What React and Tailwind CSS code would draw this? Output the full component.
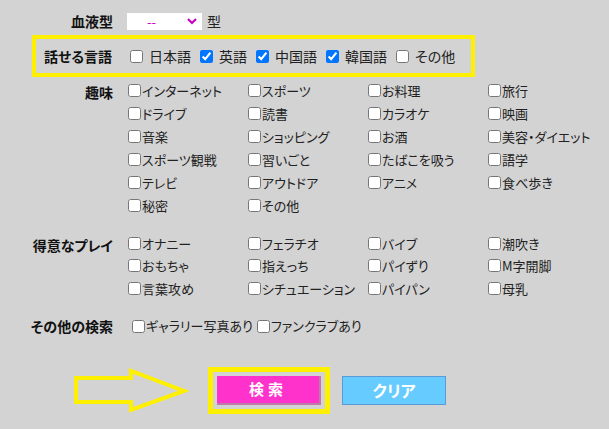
const hobbies = [
    "インターネット", "スポーツ", "お料理", "旅行",
    "ドライブ", "読書", "カラオケ", "映画",
    "音楽", "ショッピング", "お酒", "美容・ダイエット",
    "スポーツ観戦", "習いごと", "たばこを吸う", "語学",
    "テレビ", "アウトドア", "アニメ", "食べ歩き",
    "秘密", "その他",
];

const plays = [
    "オナニー", "フェラチオ", "バイブ", "潮吹き",
    "おもちゃ", "指えっち", "パイずり", "M字開脚",
    "言葉攻め", "シチュエーション", "パイパン", "母乳",
];

const languages = [
    { name: "日本語", checked: false },
    { name: "英語", checked: true },
    { name: "中国語", checked: true },
    { name: "韓国語", checked: true },
    { name: "その他", checked: false },
];

const Check = ({ checked = false }) => (
    <input type="checkbox" defaultChecked={checked} className="m-0 w-[13px] h-[13px] shrink-0 accent-[#0075ff]" />
);

const Label = ({ children, className = "" }) => (
    <div className={`w-[113px] shrink-0 text-right font-bold text-[14px] text-[#111] ${className}`}>{children}</div>
);

const CheckGrid = ({ items }) => (
    <div className="grid grid-cols-[120px_120px_120px_120px] ml-[15px]">
        {items.map((item) => (
            <label key={item} className="flex items-center h-[23px] text-[13px] text-[#222] whitespace-nowrap">
                <Check />
                <span className="ml-px">{item}</span>
            </label>
        ))}
    </div>
);

const Arrow = () => (
    <svg width="116" height="45" viewBox="0 0 116 45">
        <path d="M3 10 H58 V3 L111 23 L58 42 V34 H3 Z" fill="none" stroke="#fff000" strokeWidth="4" />
    </svg>
);

export default function App() {
    return (
        <div className="w-[609px] h-[429px] bg-[#d3d3d3] overflow-hidden [font-feature-settings:'palt']" style={{ fontFamily: '"Noto Sans CJK JP", "Noto Sans", sans-serif' }}>
            {/* 血液型 */}
            <div className="flex items-center pt-[13px] h-[30px]">
                <Label>血液型</Label>
                <div className="ml-[14px] w-[75px] h-[17px] bg-white flex items-center justify-between pl-[20px] pr-[5px] text-[#cc00cc] text-[13px] leading-none">
                    <span>--</span>
                    <svg width="10" height="7" viewBox="0 0 10 7"><path d="M1 1 L5 5 L9 1" fill="none" stroke="#cc00cc" strokeWidth="2.2" /></svg>
                </div>
                <span className="ml-[5px] text-[14px] text-[#222]">型</span>
            </div>

            {/* 話せる言語 */}
            <div className="ml-[32px] mt-[5px] w-[443px] h-[42px] border-4 border-[#fff000] flex items-center">
                <div className="w-[76px] shrink-0 text-right font-bold text-[14px] text-[#111]">話せる言語</div>
                <div className="flex items-center ml-[18px] text-[14px] text-[#222]">
                    {languages.map((lang, i) => (
                        <label key={lang.name} className={`flex items-center ${i > 0 ? "ml-[9px]" : ""}`}>
                            <Check checked={lang.checked} />
                            <span className="ml-[6px]">{lang.name}</span>
                        </label>
                    ))}
                </div>
            </div>

            {/* 趣味 */}
            <div className="flex mt-[2px]">
                <Label className="leading-[23px] pt-[2px]">趣味</Label>
                <CheckGrid items={hobbies} />
            </div>

            {/* 得意なプレイ */}
            <div className="flex mt-[15px]">
                <Label className="leading-[23px] pt-[2px]">得意なプレイ</Label>
                <div className="[&>div>label]:h-[22.5px]">
                    <CheckGrid items={plays} />
                </div>
            </div>

            {/* その他の検索 */}
            <div className="flex items-center mt-[16px]">
                <Label>その他の検索</Label>
                <div className="flex items-center ml-[19px] text-[13px] text-[#222]">
                    <label className="flex items-center">
                        <Check />
                        <span className="ml-px">ギャラリー写真あり</span>
                    </label>
                    <label className="flex items-center ml-[4px]">
                        <Check />
                        <span className="ml-px">ファンクラブあり</span>
                    </label>
                </div>
            </div>

            {/* buttons */}
            <div className="flex items-center mt-[30px]">
                <div className="ml-[73px]">
                    <Arrow />
                </div>
                <div className="ml-[19px] border-[5px] border-[#fff000] p-[4px]">
                    <button className="w-[104px] h-[29px] bg-[#ff33cc] border-b-2 border-r-2 border-[#c07aa8] text-white font-bold text-[15px] tracking-[4px]">
                        検索
                    </button>
                </div>
                <button className="ml-[12px] w-[104px] h-[29px] bg-[#66ccff] border border-[#5b9bd5] text-white font-bold text-[16px]">
                    クリア
                </button>
            </div>
        </div>
    );
}
